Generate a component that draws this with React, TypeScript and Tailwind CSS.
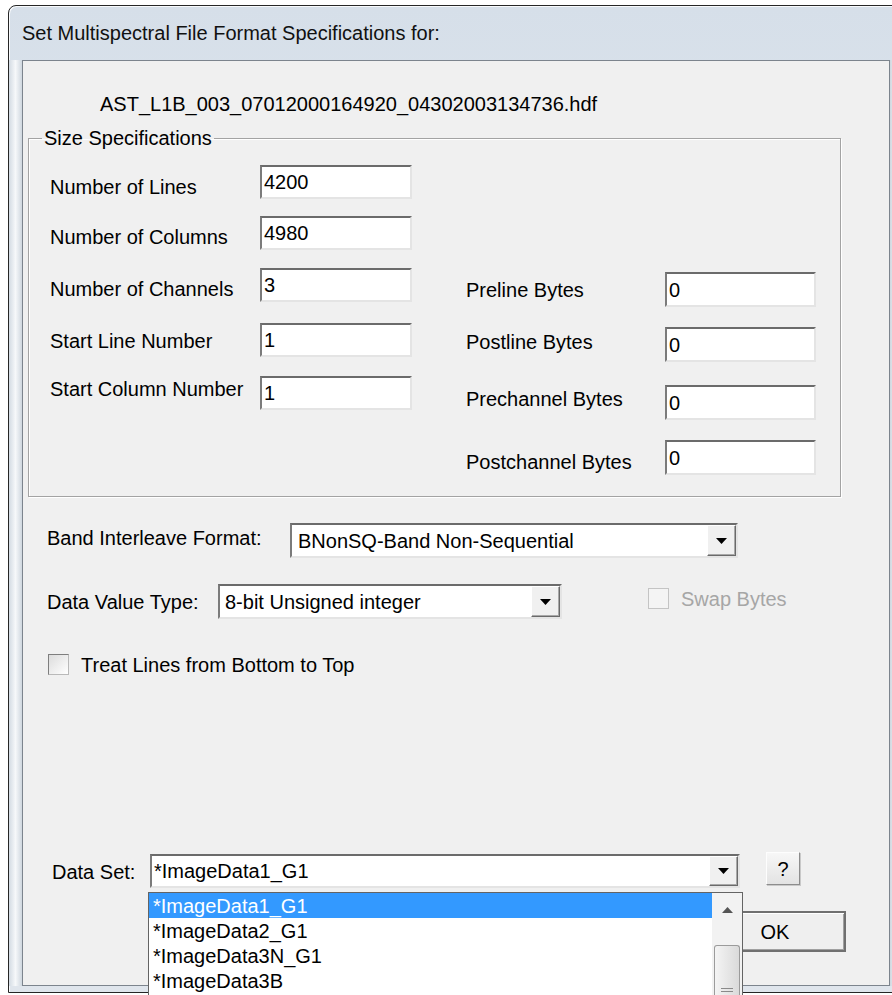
import React from 'react';

type Row = { label: string; value: string; gap: string; shift: string };

const sizeRows: Row[] = [
  { label: 'Number of Lines', value: '4200', gap: 'mt-[15px]', shift: 'translate-y-[5px]' },
  { label: 'Number of Columns', value: '4980', gap: 'mt-[17px]', shift: 'translate-y-[4px]' },
  { label: 'Number of Channels', value: '3', gap: 'mt-[18px]', shift: 'translate-y-[4px]' },
  { label: 'Start Line Number', value: '1', gap: 'mt-[21px]', shift: 'translate-y-[1px]' },
  { label: 'Start Column Number', value: '1', gap: 'mt-[19px]', shift: '-translate-y-[4px]' },
];

const byteRows: Row[] = [
  { label: 'Preline Bytes', value: '0', gap: 'mt-[122px]', shift: 'translate-y-0' },
  { label: 'Postline Bytes', value: '0', gap: 'mt-[20px]', shift: '-translate-y-[3px]' },
  { label: 'Prechannel Bytes', value: '0', gap: 'mt-[23px]', shift: '-translate-y-[4px]' },
  { label: 'Postchannel Bytes', value: '0', gap: 'mt-[20px]', shift: 'translate-y-[4px]' },
];

const dataSets = ['*ImageData1_G1', '*ImageData2_G1', '*ImageData3N_G1', '*ImageData3B'];

const sunken =
  'border-2 border-t-[#6b6b6b] border-l-[#7b7b7b] border-r-[#e4e4e4] border-b-[#e4e4e4] bg-white';

const Field = ({ value, className }: { value: string; className: string }) => (
  <div className={`flex items-center pl-[2px] leading-none ${sunken} ${className}`}>{value}</div>
);

const DownArrow = () => (
  <svg width="11" height="6" viewBox="0 0 11 6">
    <path d="M0 0h11L5.5 6z" fill="#000" />
  </svg>
);

const Combo = ({ value, className, textPad }: { value: string; className: string; textPad: string }) => (
  <div className={`flex items-center ${sunken} ${className}`}>
    <span className={`flex-1 truncate leading-[24px] ${textPad}`}>{value}</span>
    <div className="flex h-full w-[29px] items-center justify-center border border-t-white border-l-white border-r-[#6a6a6a] border-b-[#6a6a6a] bg-[#f0f0f0] shadow-[inset_-1px_-1px_0_#a8a8a8]">
      <DownArrow />
    </div>
  </div>
);

const Check = ({ disabled }: { disabled?: boolean }) => (
  <div
    className={
      disabled
        ? 'h-[21px] w-[21px] border border-[#c4c4c4] bg-[#f4f4f4]'
        : 'h-[21px] w-[21px] border border-t-[#7e7e7e] border-l-[#7e7e7e] border-r-[#b9b9b9] border-b-[#b9b9b9] bg-linear-to-br from-[#dcdcdc] to-white'
    }
  />
);

export default function App() {
  return (
    <div className="h-[995px] w-[892px] overflow-hidden bg-white font-['Liberation_Sans',Arial,sans-serif] text-[20px] text-black">
      {/* window frame */}
      <div className="ml-[8px] mt-[5px] flex h-[988px] w-[896px] flex-col rounded-t-[8px] border border-[#262626] bg-linear-to-b from-[#d6dfe9] via-[#e4eaf1] to-[#dfe5ec] shadow-[inset_1px_1px_0_#f8fafc]">
        <div className="flex h-[54px] items-center pl-[13px] leading-none text-[#111]">
          Set Multispectral File Format Specifications for:
        </div>

        <div className="flex">
          <div className="w-[13px] bg-linear-to-r from-[#d3dbe3] via-[#f6f8fa] to-[#cfd7df]" />

          {/* client area */}
          <div className="flex h-[926px] w-[868px] flex-col border border-[#7c848d] bg-[#f0f0f0]">
            <div className="ml-[77px] mt-[31px] h-[24px] leading-[24px]">
              AST_L1B_003_07012000164920_04302003134736.hdf
            </div>

            <fieldset className="ml-[5px] mt-[10px] w-[813px] border border-[#a3a3a3] pb-[21px] shadow-[inset_1px_1px_0_#fff,1px_1px_0_#fff]">
              <legend className="ml-[13px] px-[2px] leading-[24px]">Size Specifications</legend>
              <div className="flex pl-[21px]">
                <div className="flex w-[416px] flex-col">
                  {sizeRows.map((r) => (
                    <div key={r.label} className={`flex h-[34px] items-center ${r.gap}`}>
                      <span className={`w-[210px] leading-none ${r.shift}`}>{r.label}</span>
                      <Field value={r.value} className="h-[34px] w-[152px]" />
                    </div>
                  ))}
                </div>
                <div className="flex flex-col">
                  {byteRows.map((r) => (
                    <div key={r.label} className={`flex h-[35px] items-center ${r.gap}`}>
                      <span className={`w-[199px] leading-none ${r.shift}`}>{r.label}</span>
                      <Field value={r.value} className="h-[35px] w-[151px]" />
                    </div>
                  ))}
                </div>
              </div>
            </fieldset>

            <div className="ml-[24px] mt-[26px] flex h-[35px] items-center">
              <span className="w-[243px] -translate-y-[3px] leading-none">Band Interleave Format:</span>
              <Combo value="BNonSQ-Band Non-Sequential" className="h-[35px] w-[448px]" textPad="pl-[6px]" />
            </div>

            <div className="ml-[24px] mt-[26px] flex h-[35px] items-center">
              <span className="w-[171px] leading-none">Data Value Type:</span>
              <Combo value="8-bit Unsigned integer" className="h-[35px] w-[344px]" textPad="pl-[5px]" />
              <div className="ml-[86px] -translate-y-[3px]">
                <Check disabled />
              </div>
              <span className="ml-[12px] -translate-y-[3px] leading-none text-[#a6a6a6]">Swap Bytes</span>
            </div>

            <div className="ml-[25px] mt-[35px] flex h-[21px] items-center">
              <Check />
              <span className="ml-[12px] leading-none">Treat Lines from Bottom to Top</span>
            </div>

            <div className="ml-[29px] mt-[177px] flex h-[36px] items-start">
              <span className="mt-[8px] w-[98px] leading-[24px]">Data Set:</span>
              <div className="relative mt-[2px]">
                <Combo value="*ImageData1_G1" className="h-[34px] w-[590px]" textPad="pl-[2px]" />

                {/* open drop-down list */}
                <div className="absolute left-[-2px] top-[38px] z-10 flex h-[104px] w-[595px] border border-b-0 border-[#646464] bg-white">
                  <div className="flex flex-1 flex-col">
                    {dataSets.map((d, i) => (
                      <div
                        key={d}
                        className={`flex h-[25px] shrink-0 items-center pl-[4px] leading-none ${
                          i === 0 ? 'bg-[#3399ff] text-white' : ''
                        }`}
                      >
                        {d}
                      </div>
                    ))}
                  </div>
                  <div className="flex w-[30px] flex-col bg-[#f2f2f2]">
                    <div className="flex h-[34px] items-center justify-center">
                      <svg width="11" height="6" viewBox="0 0 11 6">
                        <path d="M5.5 0L11 6H0z" fill="#555" />
                      </svg>
                    </div>
                    <div className="mx-[2px] mt-[18px] flex flex-1 flex-col items-center justify-end rounded-t-[3px] border border-b-0 border-[#9b9b9b] bg-linear-to-r from-[#f4f4f4] to-[#dadada] pb-[4px]">
                      <div className="h-[1px] w-[12px] bg-[#8a8a8a]" />
                      <div className="mt-[2px] h-[1px] w-[12px] bg-[#8a8a8a]" />
                    </div>
                  </div>
                </div>
              </div>
              <div className="ml-[26px] flex h-[33px] w-[34px] items-center justify-center border border-t-[#fdfdfd] border-l-[#fdfdfd] border-r-[#8d8d8d] border-b-[#8d8d8d] bg-linear-to-b from-[#f7f7f7] to-[#e3e3e3] leading-none shadow-[1px_1px_0_#c9c9c9]">
                ?
              </div>
            </div>

            <div className="mr-[43px] mt-[23px] flex h-[41px] w-[142px] items-center justify-center self-end border-2 border-[#707070] bg-[#efefef] leading-none shadow-[inset_1px_1px_0_#fff,inset_-1px_-1px_0_#a0a0a0]">
              OK
            </div>
          </div>

          <div className="w-[13px] bg-linear-to-r from-[#cfd7df] via-[#f6f8fa] to-[#d3dbe3]" />
        </div>
      </div>
    </div>
  );
}
